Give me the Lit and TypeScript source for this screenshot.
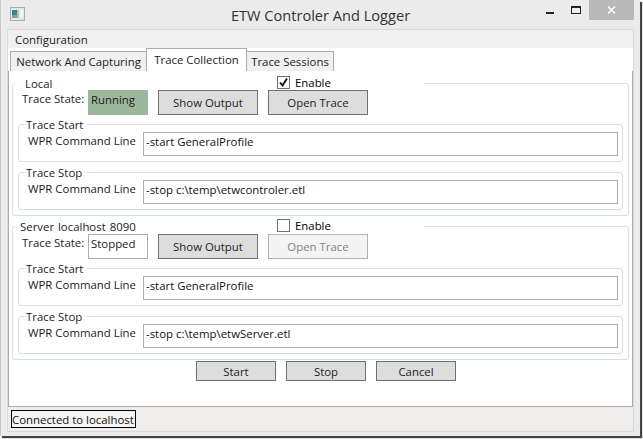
import { LitElement, html, css, svg } from "lit";
import { customElement } from "lit/decorators.js";

@customElement("app-root")
export class AppRoot extends LitElement {
  static styles = css`
    :host { display: block; width: 643px; height: 439px; background: #fff; font-family: "Open Sans", "Noto Sans", sans-serif; font-size: 11.4px; color: #1c1c1c; overflow: hidden; }
    * { box-sizing: border-box; }
    .window { width: 640px; height: 436px; background: #ebebeb; border-left: 1px solid #c8c8c8; box-shadow: 2px 2px 1px #444; display: flex; flex-direction: column; padding: 0 6px 4px 6px; }
    .titlebar { height: 29px; flex: none; display: flex; align-items: flex-start; position: relative; }
    .appicon { margin: 7px 0 0 3px; }
    .title { position: absolute; left: 0; right: 0; top: 5px; text-align: center; font-size: 14.6px; color: #333; line-height: 20px; }
    .controls { margin-left: auto; display: flex; align-items: flex-start; }
    .ctl { width: 26px; height: 20px; display: flex; align-items: center; justify-content: center; }
    .close { width: 45px; background: #b9b9b9; }
    .client { flex: 1; border: 1px solid #d9d9d9; background: #fff; display: flex; flex-direction: column; min-height: 0; }
    .menu { height: 18px; flex: none; background: #f0f0f0; padding-left: 7px; line-height: 20px; }
    .tabs { height: 23px; flex: none; display: flex; align-items: flex-end; padding-left: 2px; background: #fff; position: relative; z-index: 1; margin-bottom: -1px; }
    .tab { height: 20px; width: 137px; border: 1px solid #acacac; border-bottom: none; background: #f0f0f0; text-align: center; line-height: 19px; margin-right: -1px; white-space: nowrap; }
    .tab.sel { width: 101px; height: 23px; background: #fff; line-height: 22px; position: relative; z-index: 2; }
    .tab.last { width: 88px; }
    .page { flex: none; height: 337px; border: 1px solid #acacac; background: #fff; padding: 5px 3px 0 3px; display: flex; flex-direction: column; }
    fieldset { margin: 0; padding: 0; border: 1px solid #d5dfe5; border-radius: 3px; min-width: 0; }
    legend { padding: 0; line-height: 15px; height: 14px; }
    .outer { padding: 0 5px 5px 5px; }
    .outer + .outer { margin-top: 3px; }
    .outer > legend { width: 409px; margin-left: -3px; display: flex; position: relative; }
    .caption { padding-left: 10px; white-space: nowrap; }
    .server .caption { padding-left: 5px; word-spacing: 1px; }
    .enable { position: absolute; left: 262px; top: 0; display: flex; align-items: center; gap: 5px; height: 13px; line-height: 11px; color: #000; }
    .check { width: 13px; height: 13px; border: 1px solid #707070; background: #fff; display: block; flex: none; }
    .state-row { display: flex; align-items: flex-start; height: 25px; margin-bottom: 2px; }
    .server .state-row { margin-top: 1px; }
    .state-label { width: 70px; padding-left: 4px; line-height: 18px; white-space: nowrap; }
    .state { width: 60px; height: 25px; border: 1px solid #abadb3; padding-left: 2px; line-height: 18px; }
    .state.running { background: #9cb89c; border-color: #9cb89c; }
    .btn { height: 25px; border: 1px solid #707070; background: #dddddd; text-align: center; line-height: 23px; }
    .wide { width: 100px; margin-left: 10px; }
    .wide.disabled { border-color: #adb2b5; background: #f4f4f4; color: #838383; }
    .inner { padding: 0 4px 5px 9px; }
    .inner + .inner { margin-top: 3px; }
    .inner > legend { margin-left: -3px; padding: 0 4px 0 1px; }
    .cmd { display: flex; align-items: flex-start; height: 24px; margin-top: 1px; }
    .cmd-label { width: 115px; line-height: 18px; white-space: nowrap; }
    .cmd-input { flex: 1; height: 24px; border: 1px solid #abadb3; padding-left: 2px; line-height: 18px; color: #111; }
    .actions { display: flex; gap: 10px; padding-left: 184px; margin-top: 1px; }
    .actions .btn { width: 80px; height: 20px; line-height: 19px; }
    .status { flex: 1; background: #f0eded; padding: 3px 0 0 3px; }
    .status span { display: inline-block; width: 125px; height: 18px; border: 1px solid #000; line-height: 17px; white-space: nowrap; background: #f6f4f4; color: #111; vertical-align: top; }
  `;

  private cmd(title: string, value: string) {
    return html`<fieldset class="inner"><legend>${title}</legend>
      <div class="cmd"><div class="cmd-label">WPR Command Line</div><div class="cmd-input">${value}</div></div>
    </fieldset>`;
  }

  private group(cls: string, caption: string, checked: boolean, state: string, running: boolean, openDisabled: boolean, start: string, stop: string) {
    return html`<fieldset class="outer ${cls}">
      <legend><span class="caption">${caption}</span>
        <span class="enable"><svg class="check" viewBox="0 0 11 11">${checked ? svg`<path d="M2 5.5 L4.5 8.5 L9 1.5" fill="none" stroke="#111" stroke-width="1.9"/>` : ""}</svg>Enable</span>
      </legend>
      <div class="state-row">
        <div class="state-label">Trace State:</div>
        <div class="state ${running ? "running" : ""}">${state}</div>
        <div class="btn wide">Show Output</div>
        <div class="btn wide ${openDisabled ? "disabled" : ""}">Open Trace</div>
      </div>
      ${this.cmd("Trace Start", start)}
      ${this.cmd("Trace Stop", stop)}
    </fieldset>`;
  }

  render() {
    return html`<div class="window">
      <div class="titlebar">
        <svg class="appicon" width="15" height="14" viewBox="0 0 15 14"><rect x="0.5" y="0.5" width="14" height="13" fill="#e4e8ea" stroke="#a9acae"/><rect x="2" y="3" width="5" height="8" fill="#3f7f8f"/><rect x="2" y="8" width="5" height="3" fill="#6fae8a"/><rect x="7" y="3" width="2" height="8" fill="#a9c9bd"/><rect x="10" y="3" width="3" height="8" fill="#f4f6f6"/></svg>
        <div class="title">ETW Controler And Logger</div>
        <div class="controls">
          <div class="ctl"><svg width="8" height="8" viewBox="0 0 8 8"><rect width="8" height="2" y="6" fill="#222"/></svg></div>
          <div class="ctl"><svg width="10" height="8" viewBox="0 0 10 8"><rect x="0.5" y="0.5" width="9" height="7" fill="none" stroke="#222"/><rect width="10" height="2" fill="#222"/></svg></div>
          <div class="ctl close"><svg width="9" height="8" viewBox="0 0 9 8"><path d="M1 0.5 L8 7.5 M8 0.5 L1 7.5" stroke="#fff" stroke-width="1.5"/></svg></div>
        </div>
      </div>
      <div class="client">
        <div class="menu">Configuration</div>
        <div class="tabs">
          <div class="tab">Network And Capturing</div>
          <div class="tab sel">Trace Collection</div>
          <div class="tab last">Trace Sessions</div>
        </div>
        <div class="page">
          ${this.group("local", "Local", true, "Running", true, false, "-start GeneralProfile", "-stop c:\\temp\\etwcontroler.etl")}
          ${this.group("server", "Server localhost 8090", false, "Stopped", false, true, "-start GeneralProfile", "-stop c:\\temp\\etwServer.etl")}
          <div class="actions"><div class="btn">Start</div><div class="btn">Stop</div><div class="btn">Cancel</div></div>
        </div>
        <div class="status"><span>Connected to localhost</span></div>
      </div>
    </div>`;
  }
}
